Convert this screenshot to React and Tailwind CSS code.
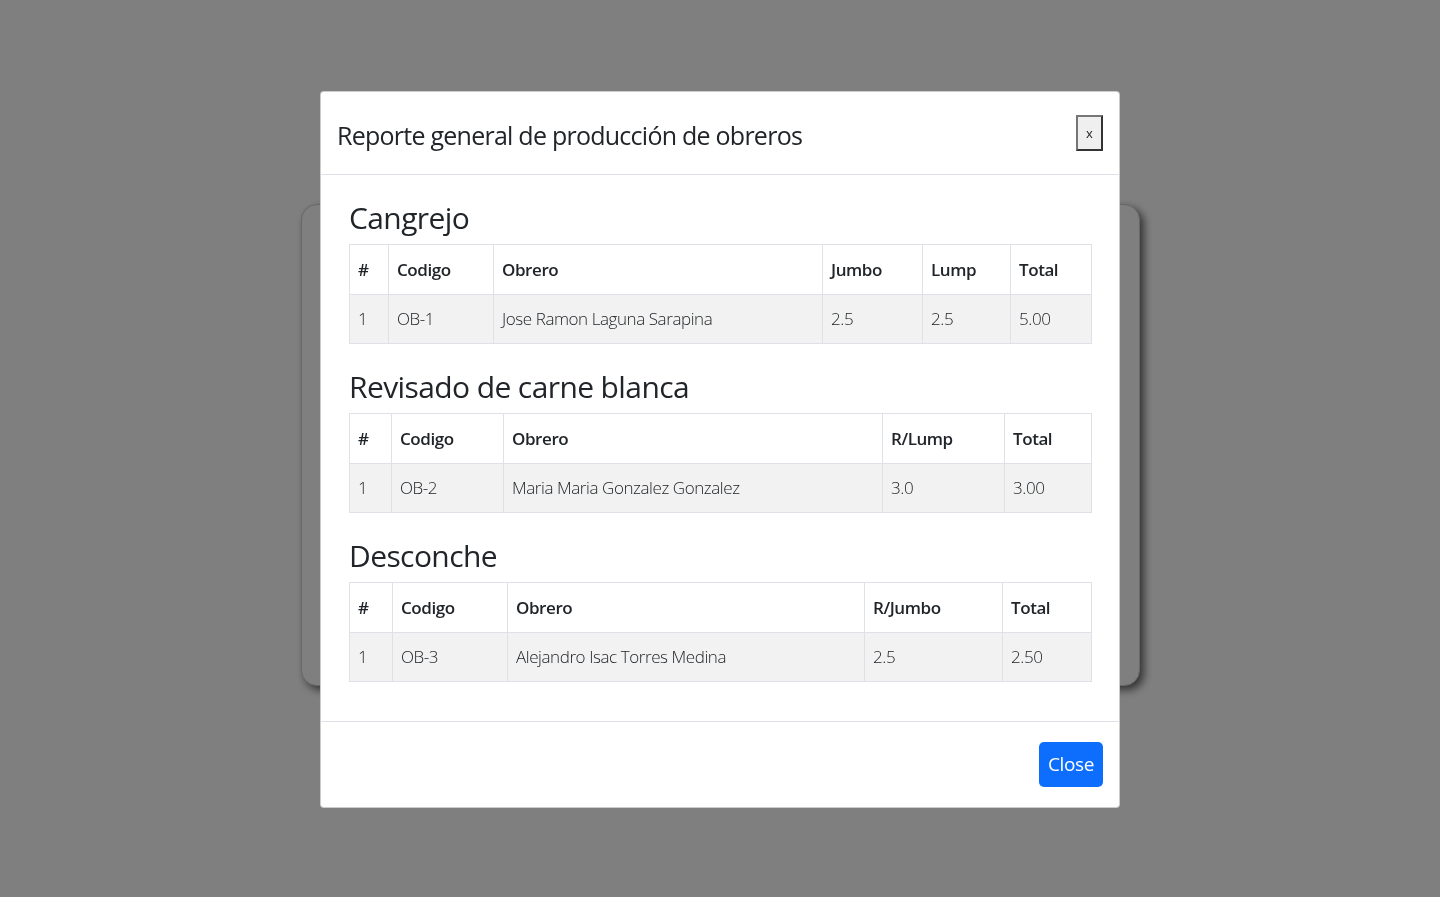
import React from 'react';

const font = { fontFamily: '"Open Sans", "Noto Sans", sans-serif' };

const sections = [
  {
    title: 'Cangrejo',
    cols: [
      { label: '#', w: 'w-[39px]' },
      { label: 'Codigo', w: 'w-[105px]' },
      { label: 'Obrero', w: 'w-[329px]' },
      { label: 'Jumbo', w: 'w-[100px]' },
      { label: 'Lump', w: 'w-[88px]' },
      { label: 'Total', w: 'w-[81px]' },
    ],
    rows: [['1', 'OB-1', 'Jose Ramon Laguna Sarapina', '2.5', '2.5', '5.00']],
  },
  {
    title: 'Revisado de carne blanca',
    cols: [
      { label: '#', w: 'w-[42px]' },
      { label: 'Codigo', w: 'w-[112px]' },
      { label: 'Obrero', w: 'w-[379px]' },
      { label: 'R/Lump', w: 'w-[122px]' },
      { label: 'Total', w: 'w-[87px]' },
    ],
    rows: [['1', 'OB-2', 'Maria Maria Gonzalez Gonzalez', '3.0', '3.00']],
  },
  {
    title: 'Desconche',
    cols: [
      { label: '#', w: 'w-[43px]' },
      { label: 'Codigo', w: 'w-[115px]' },
      { label: 'Obrero', w: 'w-[357px]' },
      { label: 'R/Jumbo', w: 'w-[138px]' },
      { label: 'Total', w: 'w-[89px]' },
    ],
    rows: [['1', 'OB-3', 'Alejandro Isac Torres Medina', '2.5', '2.50']],
  },
];

const ReportTable = ({ cols, rows }) => (
  <table className="w-full table-fixed border-collapse border border-[#dee2e6] text-[17px] tracking-[-0.025em] text-[#212529]">
    <colgroup>
      {cols.map((c) => (
        <col key={c.label} className={c.w} />
      ))}
    </colgroup>
    <thead>
      <tr className="h-[50px]">
        {cols.map((c) => (
          <th key={c.label} className="border border-[#dee2e6] px-2 text-left font-semibold">
            {c.label}
          </th>
        ))}
      </tr>
    </thead>
    <tbody>
      {rows.map((r, i) => (
        <tr key={i} className="h-[49px] bg-[#f2f2f2]">
          {r.map((v, j) => (
            <td key={j} className="border border-[#dee2e6] px-2 font-[350]">
              {v}
            </td>
          ))}
        </tr>
      ))}
    </tbody>
  </table>
);

export default function App() {
  return (
    <div className="relative min-h-screen bg-white" style={font}>
      <div className="flex h-[897px] justify-center pt-[204px]">
        <div className="h-[482px] w-[839px] rounded-2xl border border-[#d0d0d0] bg-white shadow-[4px_4px_8px_rgba(0,0,0,0.6)]" />
      </div>

      <div className="fixed inset-0 bg-black/50">
        <div className="mx-auto mt-[91px] w-[800px] rounded-[4px] border border-black/20 bg-white text-[#212529]">
          <div className="flex h-[83px] items-center justify-between border-b border-[#dee2e6] px-4">
            <h5 className="mt-[5px] text-[25px] font-normal tracking-[-0.03em]">Reporte general de producción de obreros</h5>
            <button className="h-9 w-[27px] border-2 border-t-[#767676] border-l-[#767676] border-r-[#333] border-b-[#333] bg-[#efefef] text-[13px] leading-none text-[#222]">
              x
            </button>
          </div>

          <div className="px-7 pt-[25px] pb-[39px]">
            {sections.map((s, i) => (
              <div key={s.title} className={i > 0 ? 'mt-[25px]' : ''}>
                <h3 className="mb-[9px] text-[30px] leading-[35px] font-medium tracking-[-0.02em]">{s.title}</h3>
                <ReportTable cols={s.cols} rows={s.rows} />
              </div>
            ))}
          </div>

          <div className="flex h-[86px] items-center justify-end border-t border-[#dee2e6] px-4">
            <button className="h-[45px] w-16 rounded-[5px] bg-[#0d6efd] text-[19px] tracking-[-0.02em] text-white">Close</button>
          </div>
        </div>
      </div>
    </div>
  );
}
